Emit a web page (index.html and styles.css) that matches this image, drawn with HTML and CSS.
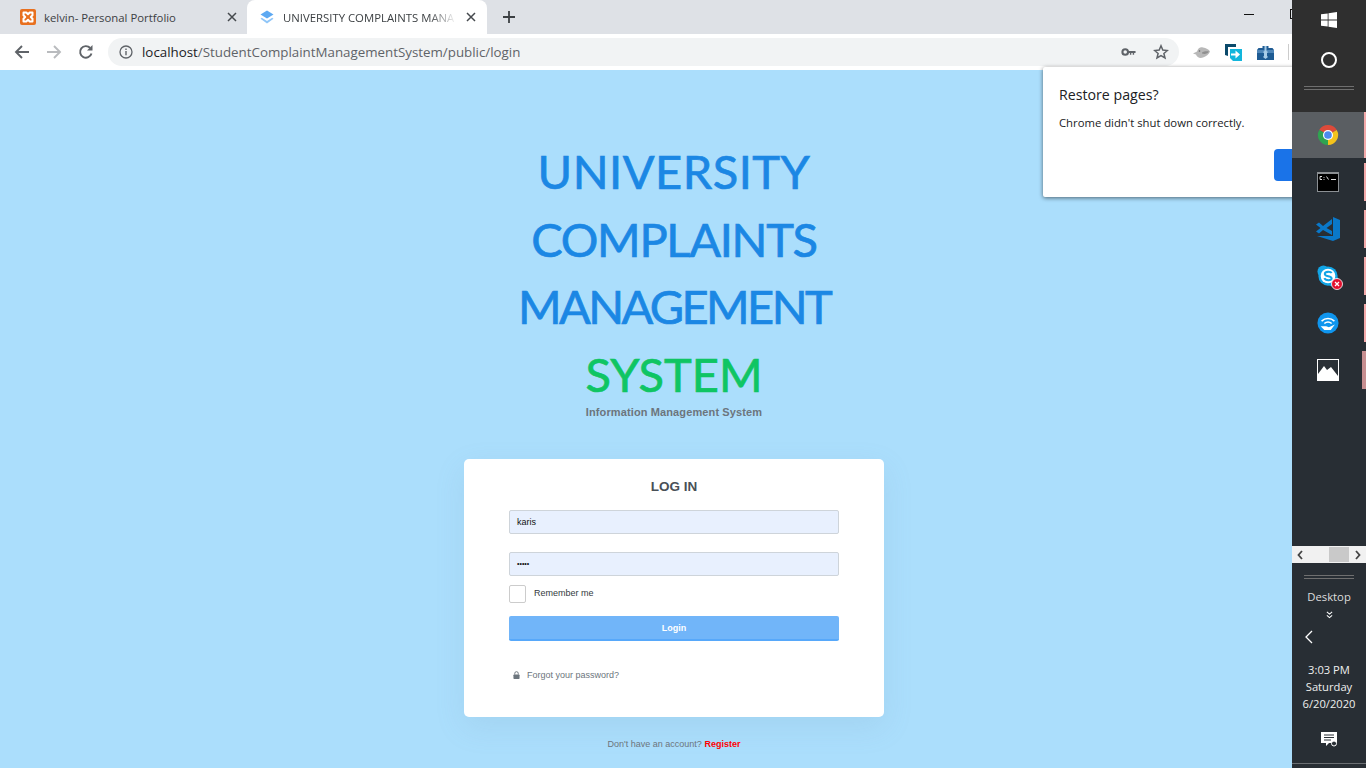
FILE: index.html
```html
<!DOCTYPE html>
<html lang="en">
<head>
<meta charset="utf-8">
<title>UNIVERSITY COMPLAINTS MANAGEMENT SYSTEM</title>
<link rel="stylesheet" href="styles.css">
</head>
<body>
<div class="desktop">
  <div class="browser">
    <div class="tabstrip">
      <div class="tab">
        <svg class="favicon" viewBox="0 0 16 16"><rect width="16" height="16" rx="2" fill="#e8701f"/><path d="M3.500 3.500H6.300L8 5.200 9.700 3.500H12.500V6.300L10.800 8 12.500 9.700V12.500H9.700L8 10.800 6.300 12.500H3.500V9.700L5.200 8 3.500 6.300Z" fill="none" stroke="#fff" stroke-width="2" stroke-linejoin="round"/></svg>
        <span class="tab-title">kelvin- Personal Portfolio</span>
        <svg class="tab-close" viewBox="0 0 10 10"><path d="M1 1l8 8M9 1l-8 8" stroke="#45494d" stroke-width="1.500"/></svg>
      </div>
      <div class="tab tab-active">
        <svg class="favicon" viewBox="0 0 16 16"><path d="M8 1.500l6.500 4-6.500 4-6.500-4z" fill="#5da9f2"/><path d="M2.800 8.800L8 12l5.200-3.200 1.300.9L8 14.500 1.500 9.700z" fill="#90c6f8"/></svg>
        <span class="tab-title tab-title-fade">UNIVERSITY COMPLAINTS MANA</span>
        <svg class="tab-close" viewBox="0 0 10 10"><path d="M1 1l8 8M9 1l-8 8" stroke="#45494d" stroke-width="1.500"/></svg>
      </div>
      <svg class="newtab" viewBox="0 0 12 12"><path d="M6 0v12M0 6h12" stroke="#3c4043" stroke-width="1.800"/></svg>
      <div class="winctl"><span class="win-min"></span><span class="win-max"></span></div>
    </div>
    <div class="toolbar">
      <svg class="navicon" viewBox="0 0 16 16"><path d="M15 8H2M8 2L2 8l6 6" fill="none" stroke="#5f6368" stroke-width="1.900"/></svg>
      <svg class="navicon" viewBox="0 0 16 16"><path d="M1 8h13M8 2l6 6-6 6" fill="none" stroke="#b9bbbe" stroke-width="1.900"/></svg>
      <svg class="navicon" viewBox="0 0 16 16"><path d="M13.500 9.500A5.800 5.800 0 1 1 12.200 4" fill="none" stroke="#5f6368" stroke-width="1.900"/><path d="M14.500 1v5.500H9z" fill="#5f6368"/></svg>
      <div class="omnibox">
        <svg class="info" viewBox="0 0 14 14"><circle cx="7" cy="7" r="6" fill="none" stroke="#5f6368" stroke-width="1.300"/><path d="M7 6v4.200M7 3.600v1.400" stroke="#5f6368" stroke-width="1.400"/></svg>
        <div class="url"><span class="url-host">localhost</span>/StudentComplaintManagementSystem/public/login</div>
        <svg class="key" viewBox="0 0 16 10"><circle cx="4.500" cy="5" r="3" fill="none" stroke="#5f6368" stroke-width="2.200"/><path d="M7 4h8.500v2h-1.500v2h-1.500V6H11v2H9.500V6H7z" fill="#5f6368"/></svg>
        <svg class="star" viewBox="0 0 16 16"><path d="M8 1.800l1.800 4.300 4.600.4-3.500 3 1.100 4.500L8 11.600 4 14l1.100-4.500-3.500-3 4.600-.4z" fill="none" stroke="#5f6368" stroke-width="1.500"/></svg>
      </div>
      <div class="extensions">
        <svg class="ext" viewBox="0 0 17 14"><path d="M0 8l4-2C5 2 8 1 10 2c3 .5 6 2 7 4-1 3-4 5-7 6-3 1-6 0-7-3z" fill="#b8b8b8"/><path d="M9 7c2-1.500 5-1.500 7-1-1 2-4 3-7 2z" fill="#8f8f8f"/><circle cx="6.500" cy="5.500" r=".8" fill="#666"/></svg>
        <svg class="ext" viewBox="0 0 17 17"><path d="M0 0h11v3H3v9l-3-1z" fill="#0b4a6b"/><path d="M5 5h12v12H8l-3-3z" fill="#12b6dc"/><path d="M6 9.500h4.500V6.500l4.500 4-4.500 4v-3H6z" fill="#fff"/></svg>
        <svg class="ext" viewBox="0 0 17 15"><path d="M5.500 3V1h6v2h4l1.500 2v10H0V5l1.500-2z" fill="#1f5c94"/><path d="M0 5h17v3H0z" fill="#4f86b8"/><path d="M7.500 1h2v5l1.500 1-1 1v3l1 1-2.500 2-2.500-2 1-1V8L6 7l1.500-1z" fill="#a9cde8"/></svg>
        <span class="toolbar-sep"></span>
      </div>
    </div>
    <main class="page">
      <div class="page-inner">
        <h1 class="brand">
          <span class="brand-line line-1">UNIVERSITY</span>
          <span class="brand-line line-2">COMPLAINTS</span>
          <span class="brand-line line-3">MANAGEMENT</span>
          <span class="brand-line line-4">SYSTEM</span>
        </h1>
        <p class="tagline">Information Management System</p>
        <form class="card">
          <h2 class="card-title">LOG IN</h2>
          <div class="field field-first">karis</div>
          <div class="field field-pass">•••••</div>
          <div class="remember"><span class="checkbox"></span><span class="remember-label">Remember me</span></div>
          <div class="login-btn">Login</div>
          <div class="forgot">
            <svg class="lock" viewBox="0 0 8 9"><path d="M2 4V2.700a2 2 0 0 1 4 0V4" fill="none" stroke="#6c757d" stroke-width="1.100"/><rect x=".5" y="4" width="7" height="5" rx=".8" fill="#6c757d"/></svg>
            <span>Forgot your password?</span>
          </div>
        </form>
        <p class="register">Don't have an account? <b class="register-link">Register</b></p>
      </div>
      <aside class="restore">
        <div class="restore-title">Restore pages?</div>
        <div class="restore-text">Chrome didn't shut down correctly.</div>
        <div class="restore-btn"></div>
      </aside>
    </main>
  </div>
  <nav class="taskbar">
    <div class="tb-top">
      <svg class="winlogo" viewBox="0 0 16 16"><path d="M0 2.300l6.700-.9v6.200H0zM7.500 1.300L16 0v7.600H7.500zM0 8.400h6.700v6.200L0 13.700zM7.500 8.400H16V16l-8.500-1.200z" fill="#fff"/></svg>
      <span class="cortana"></span>
      <span class="grip"></span>
    </div>
    <div class="tb-item tb-active">
      <svg class="tb-icon" viewBox="0 0 24 24"><path d="M12 12L2.470 6.500A11 11 0 0 1 21.530 6.500Z" fill="#dd4a3a"/><path d="M12 12L21.530 6.500A11 11 0 0 1 12 23Z" fill="#f4c21b"/><path d="M12 12L12 23A11 11 0 0 1 2.470 6.500Z" fill="#2fa350"/><circle cx="12" cy="12" r="5.500" fill="#fff"/><circle cx="12" cy="12" r="4.200" fill="#4d8bee"/></svg>
    </div>
    <div class="tb-item">
      <svg class="tb-icon" viewBox="0 0 22 20"><rect width="22" height="20" fill="#8b8f93"/><rect x="1" y="2" width="20" height="17" fill="#000"/><path d="M3 4.500h2M3 4.500v3h2M7 5v.8M7 7v.8M9.500 4.500l2 3M14 7.500h5" stroke="#ddd" stroke-width="1" fill="none"/></svg>
    </div>
    <div class="tb-item">
      <svg class="tb-icon tb-icon-code" viewBox="0 0 24 24"><path d="M17 0L24 3V21L17 24L1 19H17Z" fill="#0a78c9"/><path d="M16 2L7 9 3 5.500 0 7.500 4.500 11 0 14.500 3 16.500 7 13 16 18V14L10.500 11 16 7Z" fill="#0a78c9"/></svg>
    </div>
    <div class="tb-item">
      <svg class="tb-icon" viewBox="0 0 24 24"><circle cx="7" cy="7" r="6.500" fill="#12a5e6"/><circle cx="17" cy="17" r="6.500" fill="#12a5e6"/><circle cx="12" cy="12" r="10.500" fill="#12a5e6"/><circle cx="12" cy="12" r="8" fill="#fff"/><path d="M16 8.800c-1-1.800-7.500-2-7.500 1 0 3.200 7.500 1.600 7.500 4.800 0 2.800-6.800 2.400-8-.3" fill="none" stroke="#12a5e6" stroke-width="2.200"/></svg>
      <svg class="skype-badge" viewBox="0 0 12 12"><circle cx="6" cy="6" r="5.500" fill="#e3112f" stroke="#fff" stroke-width=".8"/><path d="M4 4l4 4M8 4l-4 4" stroke="#fff" stroke-width="1.300"/></svg>
    </div>
    <div class="tb-item">
      <svg class="tb-icon" viewBox="0 0 24 24"><circle cx="12" cy="12" r="11.500" fill="#0f95ee"/><path d="M5 10a10 10 0 0 1 14 0M8 12.500a6 6 0 0 1 8 0" fill="none" stroke="#fff" stroke-width="1.700"/><path d="M4 15.500h6l3 1 6.500-3-4.500 6H8z" fill="#fff"/></svg>
    </div>
    <div class="tb-item tb-photos">
      <svg class="tb-icon" viewBox="0 0 22 22"><rect x=".5" y=".5" width="21" height="21" fill="#2a3036" stroke="#fff"/><path d="M1 21v-6l6-8 3 4 4-3 7 9v4z" fill="#fff"/></svg>
    </div>
    <div class="tb-spacer"></div>
    <div class="tb-scroll">
      <svg class="tb-arrow" viewBox="0 0 6 10"><path d="M5 1L1.500 5 5 9" fill="none" stroke="#444" stroke-width="1.800"/></svg>
      <span class="tb-thumb"></span>
      <svg class="tb-arrow" viewBox="0 0 6 10"><path d="M1 1l3.500 4L1 9" fill="none" stroke="#444" stroke-width="1.800"/></svg>
    </div>
    <span class="grip grip-low"></span>
    <div class="tb-desktop">Desktop</div>
    <svg class="tb-chevrons" viewBox="0 0 8 8"><path d="M1 .5l3 2.500L7 .5M1 4.500L4 7l3-2.500" fill="none" stroke="#fff" stroke-width="1.200"/></svg>
    <svg class="tb-back" viewBox="0 0 8 14"><path d="M7 1L1 7l6 6" fill="none" stroke="#fff" stroke-width="1.300"/></svg>
    <div class="tb-clock"><div>3:03 PM</div><div>Saturday</div><div>6/20/2020</div></div>
    <svg class="tb-notify" viewBox="0 0 16 15"><path d="M0 0h16v11H8l-3 3v-3H0z" fill="#fff"/><path d="M3 3h10M3 5.500h10M3 8h7" stroke="#2a3036" stroke-width="1"/><circle cx="13" cy="11.500" r="2.500" fill="#2a3036" stroke="#fff"/></svg>
    <span class="tb-bottomline"></span>
  </nav>
</div>
</body>
</html>
```
FILE: styles.css
```css
* { box-sizing: border-box; }
html, body { margin: 0; height: 100%; overflow: hidden; }
body { font-family: "Liberation Sans", Arial, sans-serif; }
.desktop { display: flex; width: 1366px; height: 768px; overflow: hidden; }
.browser { width: 1292px; flex: none; display: flex; flex-direction: column; overflow: hidden; }

.tabstrip { height: 34px; flex: none; background: #dee1e6; display: flex; align-items: stretch; padding-left: 8px; font-family: "Open Sans", "Noto Sans", sans-serif; font-size: 12px; color: #3c4043; }
.tab { width: 239px; display: flex; align-items: center; padding: 0 6px 0 12px; }
.tab + .tab { width: 240px; }
.tab-active { background: #fff; border-radius: 8px 8px 0 0; padding-right: 7px; }
.favicon { width: 16px; height: 16px; flex: none; margin-right: 8px; }
.tab-title { flex: 1; white-space: nowrap; overflow: hidden; font-size: 11.350px; }
.tab-title-fade { color: #3c4043; -webkit-mask-image: linear-gradient(90deg, #000 82%, transparent 98%); mask-image: linear-gradient(90deg, #000 82%, transparent 98%); }
.tab-close { width: 10px; height: 10px; flex: none; margin: 0 4px 0 6px; }
.newtab { width: 12px; height: 12px; align-self: center; margin-left: 16px; flex: none; }
.winctl { margin-left: auto; display: flex; align-items: center; gap: 36px; }
.win-min { width: 10px; height: 1px; background: #111; margin-bottom: 6px; }
.win-max { width: 10px; height: 10px; border: 1px solid #111; margin-right: -8px; margin-bottom: 6px; }

.toolbar { height: 36px; flex: none; background: #fff; display: flex; align-items: center; padding-left: 14px; }
.navicon { width: 16px; height: 16px; flex: none; margin-right: 16px; }
.omnibox { width: 1071px; height: 28px; margin-left: -2px; flex: none; background: #f1f3f4; border-radius: 14px; display: flex; align-items: center; padding: 0 10px 0 11px; }
.info { width: 14px; height: 14px; flex: none; }
.url { flex: 1; margin-left: 9px; font-family: "Open Sans", "Noto Sans", sans-serif; font-size: 13.340px; color: #5f6368; white-space: nowrap; }
.url-host { color: #202124; }
.key { width: 15px; height: 10px; flex: none; margin-right: 17px; }
.star { width: 16px; height: 16px; flex: none; }
.extensions { display: flex; align-items: center; gap: 15px; margin-left: 14px; }
.ext { width: 17px; height: 17px; flex: none; }
.toolbar-sep { width: 1px; height: 16px; background: #ccc; margin-left: -1px; }

.page { flex: 1; position: relative; background: #abdefc; }
.page-inner { width: 1348px; display: flex; flex-direction: column; align-items: center; padding-top: 68px; }
.brand { margin: 0; font-family: "Comic Sans MS", Lato, "Open Sans", sans-serif; font-weight: 400; font-size: 47px; line-height: 67.500px; text-align: center; color: #1b87e4; -webkit-text-stroke: .7px currentColor; }
.brand-line { display: block; }
.line-1 { letter-spacing: .5px; }
.line-2 { letter-spacing: -1.300px; }
.line-3 { letter-spacing: -2.600px; }
.line-4 { color: #0fc563; letter-spacing: 0; }
.tagline { margin: -3px 0 0; font-size: 11px; font-weight: 700; color: #6c757d; letter-spacing: .12px; line-height: 14px; }

.card { width: 420px; height: 258px; margin-top: 40px; background: #fff; border-radius: 5px; box-shadow: 0 10px 30px rgba(110, 150, 180, .14); padding: 18px 45px 0; display: flex; flex-direction: column; }
.card-title { margin: 0; padding-top: 1px; font-size: 13.500px; line-height: 18px; font-weight: 700; text-align: center; color: #495057; }
.field { height: 24px; background: #e8f0fe; border: 1px solid #ced4da; border-radius: 2px; font-size: 9px; color: #111; line-height: 22px; padding-left: 7px; }
.field-first { margin-top: 14px; }
.field-pass { margin-top: 18px; font-size: 7px; letter-spacing: 0; }
.remember { margin-top: 9px; display: flex; align-items: flex-start; gap: 8px; font-size: 9px; line-height: 12px; color: #343a40; }
.remember-label { padding-top: 2px; }
.checkbox { width: 17px; height: 18px; flex: none; background: #fff; border: 1px solid #ccc; border-radius: 2px; }
.login-btn { margin-top: 13px; height: 25px; background: #71b5f9; border-bottom: 2px solid #57a8fa; border-radius: 2px; color: #fff; font-size: 9px; font-weight: 700; line-height: 24px; text-align: center; }
.forgot { margin-top: 28px; padding-left: 4px; display: flex; align-items: center; gap: 7px; font-size: 9px; line-height: 12px; color: #6c757d; }
.lock { width: 7px; height: 8px; flex: none; }
.register { margin: 21px 0 0; font-size: 9px; line-height: 12px; color: #6c757d; }
.register-link { color: #f00; font-weight: 700; }

.restore { position: absolute; top: -3px; left: 1043px; width: 300px; height: 130px; background: #fff; border-radius: 2px; box-shadow: 0 1px 4px rgba(0, 0, 0, .55); padding: 18px 16px; font-family: "Open Sans", "Noto Sans", sans-serif; color: #202124; }
.restore-title { font-size: 14.200px; line-height: 20px; }
.restore-text { margin-top: 10px; font-size: 11.300px; line-height: 16px; }
.restore-btn { position: absolute; left: 231px; top: 82px; width: 60px; height: 32px; background: #1a73e8; border-radius: 4px; }

.taskbar { width: 74px; flex: none; background: #282e34; display: flex; flex-direction: column; align-items: center; color: #fff; font-family: "Open Sans", "Noto Sans", sans-serif; }
.tb-top { align-self: stretch; height: 112px; background: #2f2f2f; display: flex; flex-direction: column; align-items: center; }
.winlogo { width: 16px; height: 16px; margin-top: 12px; flex: none; }
.cortana { width: 16px; height: 16px; border: 2px solid #fff; border-radius: 50%; margin-top: 24px; flex: none; }
.grip { display: block; width: 50px; height: 4px; border-top: 1px solid #6f6f6f; border-bottom: 1px solid #6f6f6f; margin-top: 18px; flex: none; }
.tb-item { align-self: stretch; height: 47px; flex: none; position: relative; display: flex; align-items: center; justify-content: center; padding-right: 2px; }
.tb-item::after { content: ""; position: absolute; right: 0; top: 5px; bottom: 4px; width: 2px; background: #f4aaaa; }
.tb-item.tb-active { background: #5a5e62; height: 46px; }
.tb-item.tb-active::after { top: 0; bottom: 0; }
.tb-item.tb-photos::after { width: 4px; background: #c68e90; }
.tb-icon { width: 22px; height: 22px; flex: none; }
.tb-icon-code { width: 24px; height: 24px; }
.skype-badge { position: absolute; left: 39px; top: 26px; width: 12px; height: 12px; }
.tb-spacer { flex: 1; }
.tb-scroll { align-self: stretch; height: 17px; flex: none; background: #f1f1f1; display: flex; align-items: center; justify-content: space-between; padding: 0 5px; }
.tb-arrow { width: 6px; height: 10px; flex: none; }
.tb-thumb { width: 20px; height: 15px; background: #c9c9c9; margin-left: 25px; margin-right: 6px; }
.grip-low { margin-top: 12px; }
.tb-desktop { margin-top: 10px; font-size: 11.300px; line-height: 16px; color: #ddd; flex: none; }
.tb-chevrons { width: 7px; height: 8px; margin-top: 6px; flex: none; }
.tb-back { width: 8px; height: 14px; margin-top: 11px; align-self: flex-start; margin-left: 13px; flex: none; }
.tb-clock { margin-top: 17px; font-size: 11.200px; line-height: 17px; text-align: center; color: #eee; flex: none; }
.tb-notify { width: 16px; height: 15px; margin-top: 20px; flex: none; }
.tb-bottomline { align-self: stretch; height: 1px; background: #6b6f73; margin-top: 16px; margin-bottom: 4px; flex: none; }
```
